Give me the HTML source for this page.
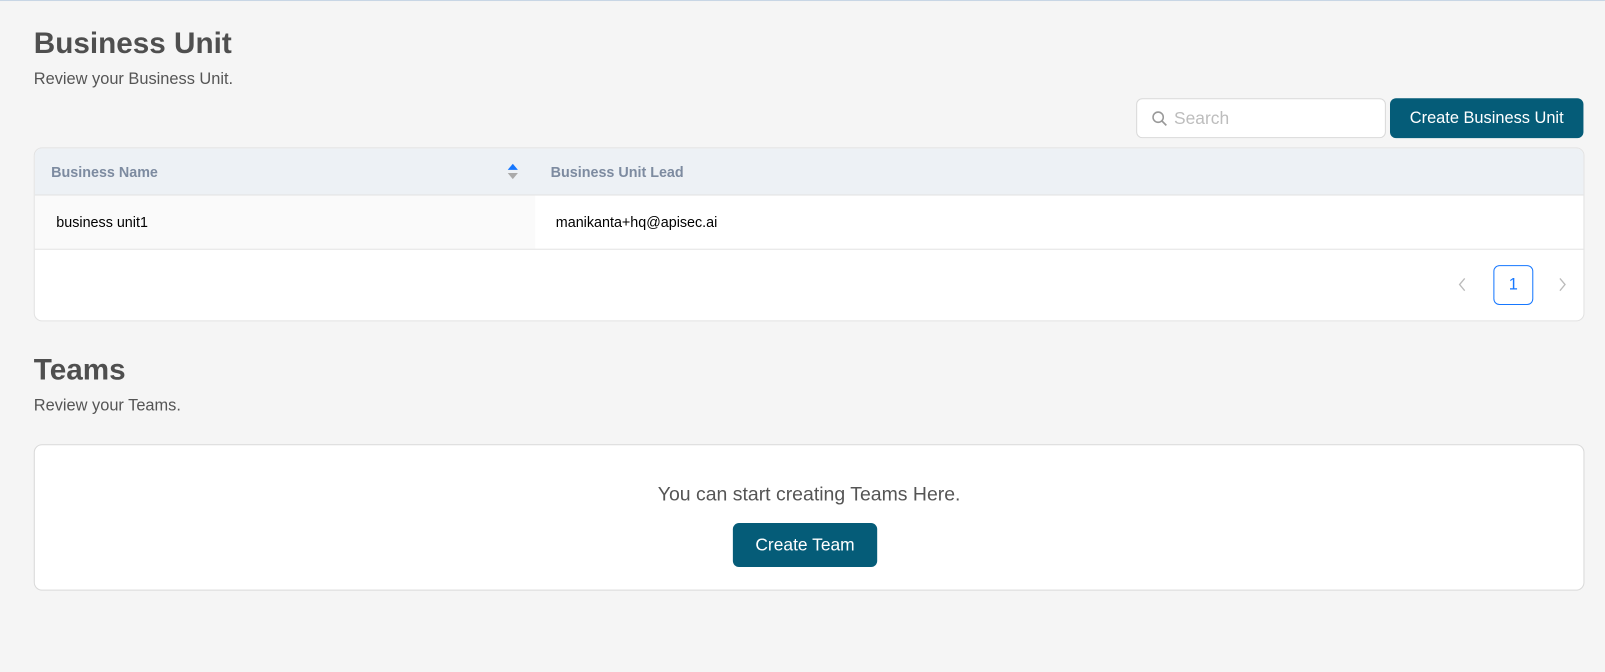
<!DOCTYPE html>
<html><head><meta charset="utf-8"><style>
*{box-sizing:border-box;margin:0;padding:0}
html,body{width:1605px;height:672px;overflow:hidden;background:#f5f5f5}
body{font-family:"Liberation Sans",Arial,sans-serif;position:relative}
#w{position:absolute;left:0;top:0;width:1568px;height:657px;transform:scale(1.02356);transform-origin:0 0;border-top:1px solid #c8d6e5}
.a{position:absolute}
h1{position:absolute;font-size:29px;font-weight:bold;color:#4f4f4f;left:33px}
.sub{position:absolute;font-size:16px;color:#555;left:33px}
.btn{position:absolute;background:#055c78;color:#fff;border-radius:6px;font-size:16px;display:flex;align-items:center;justify-content:center}
</style></head><body><div id="w">
<h1 style="top:26px">Business Unit</h1>
<div class="sub" style="top:68px">Review your Business Unit.</div>
<div class="a" style="left:1110px;top:95px;width:244px;height:39px;background:#fff;border:1px solid #d9d9d9;border-radius:6px">
<svg class="a" style="left:14px;top:11px" width="16" height="16" viewBox="0 0 16 16"><circle cx="6.5" cy="6.5" r="5" fill="none" stroke="#999" stroke-width="1.5"/><path d="M10.2 10.2L14.5 14.5" stroke="#999" stroke-width="1.6"/></svg>
<span class="a" style="left:36px;top:9px;font-size:17px;color:#bdbdbd">Search</span></div>
<div class="btn" style="left:1358px;top:95px;width:189px;height:39px">Create Business Unit</div>
<div class="a" style="left:33px;top:143px;width:1515px;height:170px;background:#fff;border:1px solid #e2e2e2;border-radius:8px;overflow:hidden">
<div class="a" style="left:0;top:0;width:100%;height:46px;background:#edf1f5;border-bottom:1px solid #e2e2e2"></div>
<span class="a" style="left:16px;top:15px;font-size:14px;font-weight:bold;color:#7d8ba0">Business Name</span>
<svg class="a" style="left:462px;top:15px" width="10" height="16" viewBox="0 0 10 16"><path d="M0 6L5 0L10 6Z" fill="#1677ff"/><path d="M0 9L5 15L10 9Z" fill="#aaa"/></svg>
<span class="a" style="left:504px;top:15px;font-size:14px;font-weight:bold;color:#7d8ba0">Business Unit Lead</span>
<div class="a" style="left:0;top:46px;width:489px;height:52px;background:#fafafa"></div>
<div class="a" style="left:0;top:98px;width:100%;height:1px;background:#e2e2e2"></div>
<span class="a" style="left:21px;top:64px;font-size:14px;color:#000">business unit1</span>
<span class="a" style="left:509px;top:64px;font-size:14px;color:#000">manikanta+hq@apisec.ai</span>
<svg class="a" style="left:1390px;top:126px" width="10" height="14" viewBox="0 0 10 14"><path d="M7 1L2 7L7 13" fill="none" stroke="#bbb" stroke-width="1.3"/></svg>
<div class="a" style="left:1425px;top:114px;width:39px;height:39px;border:1px solid #1677ff;border-radius:6px;color:#1677ff;font-size:16px;display:flex;align-items:center;justify-content:center">1</div>
<svg class="a" style="left:1487px;top:126px" width="10" height="14" viewBox="0 0 10 14"><path d="M3 1L8 7L3 13" fill="none" stroke="#bbb" stroke-width="1.3"/></svg>
</div>
<h1 style="top:345px">Teams</h1>
<div class="sub" style="top:387px">Review your Teams.</div>
<div class="a" style="left:33px;top:433px;width:1515px;height:143px;background:#fff;border:1px solid #d9d9d9;border-radius:8px">
<div class="a" style="left:0;width:100%;top:38px;text-align:center;font-size:19px;color:#555">You can start creating Teams Here.</div>
<div class="btn" style="left:682px;top:76px;width:141px;height:43px;font-size:17px">Create Team</div>
</div>
</div></body></html>
